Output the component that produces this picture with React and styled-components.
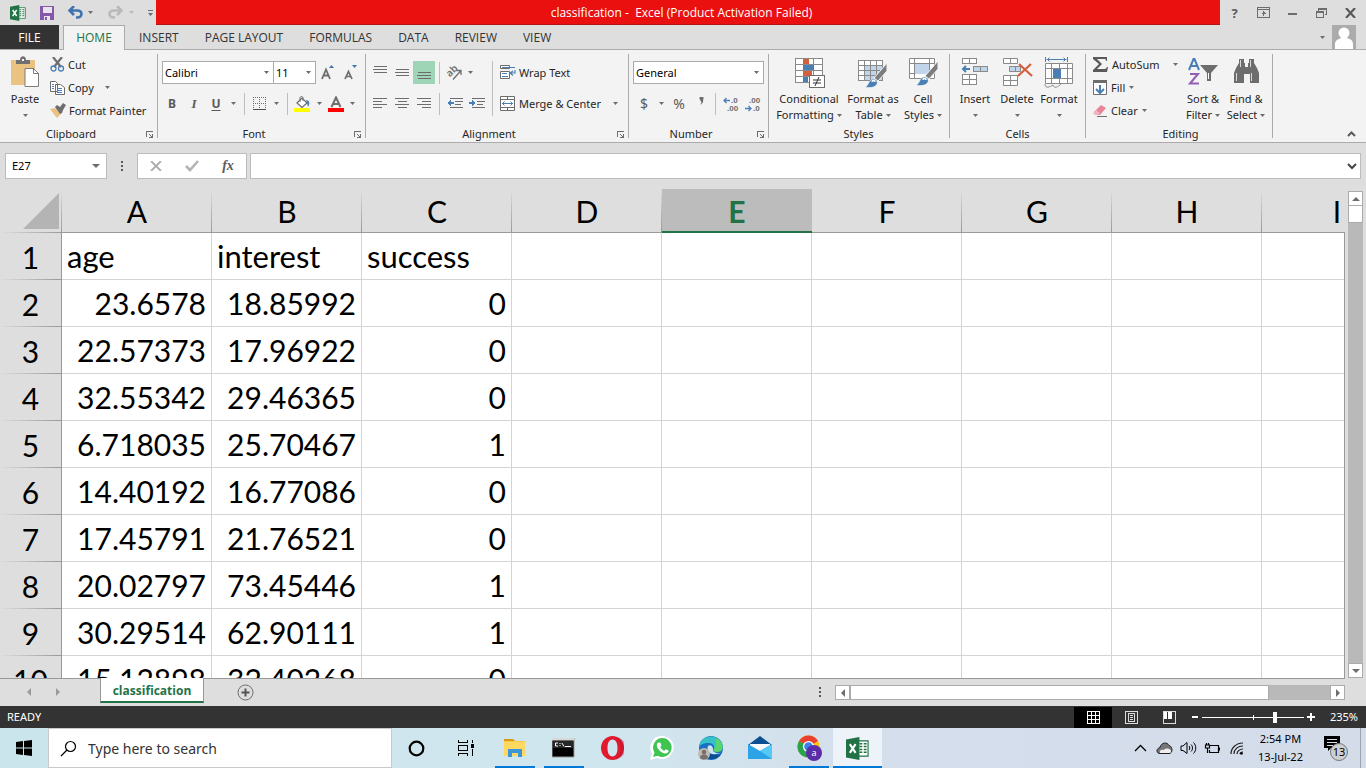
import React from "react";
import styled, { createGlobalStyle, css } from "styled-components";

const UI = `"Noto Sans", "Open Sans", "Liberation Sans", sans-serif`;
const WIDE = `"Open Sans", "Noto Sans", "Liberation Sans", sans-serif`;
const SHEET = `Lato, "Open Sans", "Liberation Sans", sans-serif`;
const GREEN = "#217346";
const GREY = "#6d6d6d";
const BLUE = "#4a7fb5";

const GlobalStyle = createGlobalStyle`
  *, *::before, *::after { box-sizing: border-box; }
  body { margin: 0; background: #dedede; color: #262626; font: 11px/16px ${UI}; }
  button, input, select { font: inherit; color: inherit; }
  button { border: 0; padding: 0; margin: 0; background: none; cursor: pointer; }
  svg { display: block; flex: none; }
`;

const Window = styled.div`
  height: 100vh;
  display: flex;
  flex-direction: column;
  overflow: hidden;
`;

/* ---------- title bar ---------- */
const TitleBar = styled.header`
  display: flex;
  height: 25px;
  flex: none;
`;
const QuickAccess = styled.div`
  width: 156px;
  flex: none;
  display: flex;
  align-items: center;
  padding-left: 10px;
`;
const QuickButton = styled.button`
  width: ${(p) => p.$w || 24}px;
  height: 22px;
  display: flex;
  align-items: center;
`;
const Title = styled.h1`
  flex: 1;
  margin: 0;
  padding-right: 13px;
  background: #eb1010;
  border-bottom: 1px solid #b51212;
  color: #fff;
  font: 400 12px/26px ${WIDE};
  text-align: center;
  white-space: pre;
`;
const WindowControls = styled.div`
  width: 146px;
  flex: none;
  display: flex;
  align-items: center;
`;
const WindowButton = styled.button`
  width: 29px;
  height: 24px;
  display: grid;
  place-items: center;
`;

/* ---------- ribbon tabs ---------- */
const TabStrip = styled.nav`
  display: flex;
  flex: none;
  height: 25px;
  border-bottom: 1px solid #ababab;
  font: 12px/16px ${WIDE};
`;
const FileTab = styled.button`
  width: 59px;
  height: 24px;
  padding-top: 1px;
  margin-right: 4px;
  background: #333;
  color: #fff;
`;
const Tab = styled.button`
  height: 24px;
  padding: 1px 13px 0;
  color: #333;
  ${(p) =>
    p.$active &&
    css`
      height: 25px;
      width: 62px;
      padding: 0;
      margin-right: 1px;
      color: ${GREEN};
      background: #f3f3f3;
      border: 1px solid #ababab;
      border-bottom: 0;
    `}
`;
const Account = styled.button`
  margin-left: auto;
  margin-right: 10px;
  height: 24px;
  display: flex;
  align-items: center;
  gap: 7px;
`;

/* ---------- ribbon ---------- */
const Ribbon = styled.section`
  display: flex;
  flex: none;
  height: 93px;
  background: #f3f3f3;
  border-bottom: 1px solid #ababab;
`;
const Group = styled.fieldset`
  width: ${(p) => p.$w}px;
  min-width: 0;
  flex: none;
  margin: 0;
  border: 0;
  padding: 0 0 0 ${(p) => p.$pad || 4}px;
  display: flex;
  flex-direction: column;
  background: linear-gradient(#ababab, #ababab) right 4px / 1px 84px no-repeat;
`;
const GroupBody = styled.div`
  height: 76px;
  padding-top: ${(p) => p.$top || 0}px;
  display: flex;
  gap: ${(p) => p.$gap || 0}px;
`;
const GroupFooter = styled.div`
  display: flex;
  height: 16px;
  margin-left: -4px;
  padding-right: 1px;
`;
const GroupName = styled.span`
  flex: 1;
  text-align: center;
`;
const Launcher = styled.button`
  width: 15px;
  height: 16px;
  display: grid;
  place-items: center;
`;
const BigButton = styled.button`
  width: ${(p) => p.$w}px;
  height: 70px;
  display: flex;
  flex-direction: column;
  align-items: center;
  white-space: nowrap;
  > svg:first-child { margin-bottom: 3px; }
`;
const BigLabel = styled.span`
  display: flex;
  align-items: center;
  gap: 3px;
  height: 16px;
`;
const Column = styled.div`
  display: flex;
  flex-direction: column;
  padding-top: ${(p) => p.$top || 0}px;
  width: ${(p) => (p.$w ? `${p.$w}px` : "auto")};
`;
const Row = styled.div`
  display: flex;
  align-items: center;
  justify-content: ${(p) => (p.$spread ? "space-between" : "flex-start")};
  height: 23px;
  margin-bottom: ${(p) => p.$mb || 0}px;
`;
const Tool = styled.button`
  width: ${(p) => p.$w || 22}px;
  height: 23px;
  display: grid;
  place-items: center;
  background: ${(p) => (p.$on ? "#9fd5b7" : "none")};
`;
const TextTool = styled.button`
  height: 23px;
  display: flex;
  align-items: center;
  gap: ${(p) => p.$gap || 3}px;
  white-space: nowrap;
`;
const Divider = styled.span`
  width: 1px;
  height: ${(p) => p.$h || 22}px;
  margin: ${(p) => p.$m || "0 4px"};
  background: #bdbdbd;
`;
const Glyph = styled.span`
  color: #5a5a5a;
  font-size: ${(p) => p.$size || 12}px;
  font-weight: ${(p) => (p.$bold ? 700 : 400)};
  font-style: ${(p) => (p.$italic ? "italic" : "normal")};
  font-family: ${(p) => (p.$serif ? `"Liberation Serif", serif` : UI)};
  text-decoration: ${(p) => (p.$underline ? "underline" : "none")};
  text-underline-offset: 2px;
`;
const SelectBox = styled.label`
  width: ${(p) => p.$w}px;
  height: 23px;
  display: flex;
  align-items: center;
  background: #fff;
  border: 1px solid #ababab;
  padding-right: 4px;
  & + & { margin-left: -1px; }
`;
const Select = styled.select`
  appearance: none;
  flex: 1;
  min-width: 0;
  height: 100%;
  border: 0;
  background: none;
  padding: 0 2px;
  color: #000;
  outline: 0;
`;
const CollapseButton = styled.button`
  width: 20px;
  height: 16px;
  margin: auto 5px 0 auto;
  display: grid;
  place-items: center;
`;

/* ---------- formula bar ---------- */
const FormulaBar = styled.div`
  flex: none;
  height: 46px;
  padding: 10px 5px 10px;
  display: flex;
  align-items: center;
`;
const NameBox = styled.label`
  width: 102px;
  height: 26px;
  display: flex;
  align-items: center;
  background: #fff;
  border: 1px solid #bcbcbc;
  padding: 0 6px;
`;
const PlainInput = styled.input`
  flex: 1;
  min-width: 0;
  border: 0;
  padding: 0;
  outline: 0;
  background: none;
  color: #000;
`;
const FormulaButtons = styled.div`
  width: 110px;
  height: 26px;
  display: flex;
  background: #fff;
  border: 1px solid #bcbcbc;
  margin-right: 3px;
`;
const FormulaButton = styled.button`
  width: 36px;
  display: grid;
  place-items: center;
`;
const FormulaField = styled.label`
  flex: 1;
  height: 26px;
  display: flex;
  align-items: center;
  background: #fff;
  border: 1px solid #bcbcbc;
  padding: 0 3px 0 6px;
`;
const Handle = styled.span`
  width: 30px;
  flex: none;
  display: grid;
  place-items: center;
`;

/* ---------- sheet ---------- */
const SheetArea = styled.main`
  flex: 1;
  min-height: 0;
  display: flex;
  padding-right: 3px;
`;
const GridClip = styled.div`
  flex: 1;
  min-width: 0;
  overflow: hidden;
  border-bottom: 1px solid #999;
`;
const RightEdge = styled.div`
  width: 4px;
  margin-top: 43px;
  border-left: 1px solid #999;
`;
const Table = styled.table`
  table-layout: fixed;
  width: 0;
  border-collapse: separate;
  border-spacing: 0;
  font: 30px/36px ${SHEET};
  color: #000;
`;
const Col = styled.col`
  width: ${(p) => p.$w}px;
`;
const Corner = styled.td`
  height: 44px;
  padding: 0 3px 0 0;
  background:
    linear-gradient(#dedede, #999) right / 1px 100% no-repeat,
    linear-gradient(90deg, #dedede, #999) bottom / 100% 1px no-repeat;
  > svg { margin-left: auto; }
`;
const ColHead = styled.th`
  height: 44px;
  padding: 1px 0 0;
  font-weight: 400;
  border-bottom: 1px solid #999;
  background: linear-gradient(#dedede, #999) right / 1px 100% no-repeat;
  ${(p) =>
    p.$selected &&
    css`
      padding-top: 2px;
      font-weight: 700;
      color: ${GREEN};
      background: #bcbcbc;
      border-bottom: 2px solid ${GREEN};
    `}
`;
const RowHead = styled.th`
  height: 47px;
  padding: 0;
  font-weight: 400;
  border-right: 1px solid #999;
  background: linear-gradient(90deg, #dedede, #999) bottom / 100% 1px no-repeat;
`;
const Cell = styled.td`
  height: 47px;
  padding: 0 5px;
  background: #fff;
  border-right: 1px solid #d4d4d4;
  border-bottom: 1px solid #d4d4d4;
  font-size: ${(p) => (p.$text ? 31 : 30)}px;
  text-align: ${(p) => (p.$text ? "left" : "right")};
  white-space: nowrap;
`;
const VScroll = styled.div`
  width: 15px;
  margin: 2px 0 1px;
  display: flex;
  flex-direction: column;
  background: #b9b9b9;
`;
const ScrollButton = styled.button`
  width: 15px;
  height: 15px;
  flex: none;
  display: grid;
  place-items: center;
  background: #fff;
  border: 1px solid #ababab;
`;
const VThumb = styled.div`
  height: 17px;
  margin-bottom: auto;
  background: #fff;
  border: 1px solid #ababab;
  border-top: 0;
`;

/* ---------- sheet tabs ---------- */
const SheetBar = styled.div`
  flex: none;
  height: 27px;
  display: flex;
  padding-right: 21px;
`;
const SheetNav = styled.div`
  width: 100px;
  display: flex;
  padding: 5px 0 0 14px;
`;
const NavButton = styled.button`
  width: 29px;
  height: 15px;
  display: grid;
  place-items: center;
`;
const SheetTab = styled.button`
  width: 104px;
  height: 25px;
  margin-top: -1px;
  padding-top: 2px;
  background: #fff;
  border: 1px solid #999;
  border-top: 0;
  border-bottom: 2px solid ${GREEN};
  color: ${GREEN};
  font: 700 12px/16px ${WIDE};
`;
const AddSheet = styled.button`
  width: 18px;
  height: 26px;
  margin-left: 32px;
  display: grid;
  place-items: center;
`;
const HScroll = styled.div`
  width: 510px;
  height: 15px;
  margin-top: 6px;
  display: flex;
  background: #b9b9b9;
`;
const HThumb = styled.div`
  width: 419px;
  margin-right: auto;
  background: #fff;
  border: 1px solid #ababab;
`;
const BarHandle = styled.span`
  margin-left: auto;
  width: 31px;
  height: 26px;
  display: grid;
  place-items: center;
`;

/* ---------- status bar ---------- */
const StatusBar = styled.footer`
  flex: none;
  height: 22px;
  display: flex;
  align-items: center;
  padding: 0 8px 0 7px;
  background: #333;
  color: #fff;
`;
const Ready = styled.span`
  margin-right: auto;
`;
const ViewButton = styled.button`
  width: 38px;
  height: 21px;
  margin-top: 1px;
  display: grid;
  place-items: center;
  background: ${(p) => (p.$on ? "#000" : "none")};
`;
const ZoomButton = styled.button`
  width: 14px;
  height: 22px;
  display: grid;
  place-items: center;
`;
const ZoomSlider = styled.input`
  appearance: none;
  width: 102px;
  height: 11px;
  margin: 0;
  background:
    linear-gradient(#fff, #fff) 51px 3px / 1px 5px no-repeat,
    linear-gradient(#fff, #fff) 0 5px / 100% 1px no-repeat;
  &::-webkit-slider-thumb {
    appearance: none;
    width: 4px;
    height: 11px;
    background: #fff;
  }
`;
const ZoomValue = styled.output`
  width: 40px;
  text-align: right;
`;

/* ---------- task bar ---------- */
const TaskBar = styled.nav`
  flex: none;
  height: 40px;
  display: flex;
  background: linear-gradient(90deg, #cbe5ed 0%, #d0e6ee 45%, #d5deec 66%, #d4dcea 100%);
  color: #000;
`;
const StartButton = styled.button`
  width: 48px;
  display: grid;
  place-items: center;
`;
const SearchBox = styled.label`
  width: 344px;
  display: flex;
  align-items: center;
  gap: 11px;
  padding-left: 11px;
  background: #fff;
  border: 1px solid #c6cacc;
`;
const SearchInput = styled(PlainInput)`
  font-size: 14px;
  line-height: 20px;
  padding-top: 1px;
  &::placeholder { color: #333; opacity: 1; }
`;
const TaskButton = styled.button`
  width: 49px;
  height: 40px;
  display: grid;
  place-items: center;
  background:
    linear-gradient(#0078d7, #0078d7) bottom / ${(p) => (p.$active ? "49px" : p.$open ? "40px" : "0")} 2px no-repeat,
    ${(p) => (p.$active ? "#eef3f9" : "transparent")};
`;
const Tray = styled.div`
  margin-left: auto;
  display: flex;
  border-right: 1px solid #9aa3ae;
  margin-right: 5px;
`;
const TrayButton = styled.button`
  width: ${(p) => p.$w || 24}px;
  display: grid;
  place-items: center;
`;
const Clock = styled.time`
  width: 63px;
  padding-top: 2px;
  text-align: center;
  line-height: 18px;
`;

/* ---------- drawings ---------- */
const Svg = ({ w = 16, h = w, children, crisp, ...rest }) => (
  <svg width={w} height={h} viewBox={`0 0 ${w} ${h}`} fill="none" aria-hidden="true" shapeRendering={crisp ? "crispEdges" : undefined} {...rest}>
    {children}
  </svg>
);
const Caret = ({ color = GREY, w = 5 }) => {
  const h = Math.ceil(w / 2);
  return (
    <Svg w={w} h={h}>
      <path d={`M0 0h${w}L${w / 2} ${h}z`} fill={color} />
    </Svg>
  );
};
const Arrow = ({ dir, color = "#6d6d6d" }) => (
  <Svg w={8} h={8}>
    <path d={{ up: "M0 6L4 2L8 6z", down: "M0 2L4 6L8 2z", left: "M6 0L2 4L6 8z", right: "M2 0L6 4L2 8z" }[dir]} fill={color} />
  </Svg>
);
const Dots = () => (
  <Svg w={2} h={10} crisp>
    <path d="M0 0h2v2H0zM0 4h2v2H0zM0 8h2v2H0z" fill="#5a5a5a" />
  </Svg>
);
const Excel = ({ w = 16 }) => (
  <svg width={w} height={w} viewBox="0 0 24 24" aria-hidden="true">
    <path d="M12 4h11v16H12z" fill="#fff" stroke={GREEN} strokeWidth="1.2" />
    <path d="M14 7h3M18.500 7h3M14 10h3M18.500 10h3M14 13h3M18.500 13h3M14 16h3M18.500 16h3" stroke={GREEN} strokeWidth="1.600" />
    <path d="M0 2.500L14 0v24L0 21.500z" fill={GREEN} />
    <path d="M4 7.500l6 9M10 7.500l-6 9" stroke="#fff" strokeWidth="2.200" />
  </svg>
);
const Lines = ({ rows }) => (
  <Svg w={15} h={13} crisp>
    {rows.map(([y, x, len]) => (
      <path key={y} d={`M${x} ${y}h${len}v1h-${len}z`} fill={GREY} />
    ))}
  </Svg>
);
const grid = (x, y, w, h, cw, ch) => {
  let d = "";
  for (let i = x; i <= x + w; i += cw) d += `M${i + 0.5} ${y}v${h + 1}`;
  for (let j = y; j <= y + h; j += ch) d += `M${x} ${j + 0.5}h${w + 1}`;
  return d;
};
const Brush = () => (
  <>
    <path d="M29 6v8l-9 10-4-3z" fill="#7d7d7d" stroke="#f3f3f3" strokeWidth="1" />
    <path d="M7 30c4-1 3-7 8-8 3 0 5 3 4 5-2 4-8 4-12 3z" fill={BLUE} stroke="#f3f3f3" strokeWidth=".6" />
    <path d="M14 25c0-2 3-2 3 0" stroke="#fff" strokeWidth="1.500" />
  </>
);
const digits = { fontFamily: "Liberation Sans", fontSize: 8, fontWeight: 700, fill: GREY };

const icons = {
  save: (
    <Svg w={14} h={14} crisp>
      <path d="M0 0h14v14H0z" fill="#8558a8" />
      <path d="M3 1h9v6H3zM4 10h6v4H4z" fill="#e9e2ef" />
      <path d="M5 11h2v3H5z" fill="#8558a8" />
    </Svg>
  ),
  undo: (
    <Svg w={15} h={13}>
      <path d="M6 0L1.500 4.500L6 9M2 4.500h7c6 0 6 7 0 7H8" stroke="#3f72ae" strokeWidth="2.600" />
    </Svg>
  ),
  redo: (
    <Svg w={15} h={13}>
      <path d="M9 0l4.500 4.500L9 9M13 4.500H6c-6 0-6 7 0 7h1" stroke="#b9b9b9" strokeWidth="2.600" />
    </Svg>
  ),
  ribbonOptions: (
    <Svg w={13} h={11} crisp>
      <path d="M.5.5h12v10H.5zM1 2.500h11M6.500 4v5M4.500 6.500h4M5.500 5.500h2" stroke={GREY} />
    </Svg>
  ),
  restore: (
    <Svg w={11} h={10} crisp>
      <path d="M2 0h9v7H9V6h1V2H3v1H2zM0 3h8v7H0zM1 5v4h6V5z" fill={GREY} fillRule="evenodd" />
    </Svg>
  ),
  close: (
    <Svg w={11} h={10}>
      <path d="M1 0l9 10M10 0L1 10" stroke="#5a5a5a" strokeWidth="2.200" />
    </Svg>
  ),
  user: (
    <Svg w={24} h={24}>
      <path d="M0 0h24v24H0z" fill="#ababab" />
      <circle cx="12" cy="8" r="5.500" fill="#fff" />
      <path d="M3 24v-5c0-4 4-5 6-6h6c3 1 6 2 6 6v5z" fill="#fff" />
    </Svg>
  ),
  launcher: (
    <Svg w={7} h={7} crisp>
      <path d="M0 0h7v1H1v5H0z M7 3v4H3V6h3V3z" fill={GREY} />
      <path d="M3 3l3 3" stroke={GREY} />
    </Svg>
  ),
  paste: (
    <Svg w={30} h={32}>
      <path d="M1 4h24v25H1z" fill="#eac282" />
      <path d="M6 8V4h4c0-5 6-5 6 0h4v4z" fill="#707070" />
      <path d="M12 3h2v2h-2z" fill="#fff" />
      <path d="M15 12.500h8.500l5 5v13H15z" fill="#fff" stroke="#7d7d7d" />
      <path d="M23.500 12v5.500H29" stroke="#7d7d7d" />
    </Svg>
  ),
  cut: (
    <Svg w={15} h={15}>
      <path d="M3 0l8 10M12 0L4 10" stroke={GREY} strokeWidth="2.200" />
      <circle cx="3.500" cy="11.500" r="2.500" stroke={BLUE} strokeWidth="1.300" />
      <circle cx="11" cy="11.500" r="2.500" stroke={BLUE} strokeWidth="1.300" />
    </Svg>
  ),
  copy: (
    <Svg w={15} h={14}>
      <path d="M.5.5h5l2 2v8h-7zM5.500 3.500h5l4 3v7h-9z" fill="#fff" stroke={GREY} />
      <path d="M2 3.500h2M2 5.500h2M2 7.500h2M7 7.500h5M7 9.500h5M7 11.500h5" stroke={BLUE} />
    </Svg>
  ),
  painter: (
    <Svg w={16} h={15}>
      <path d="M0 6l5-1 6 6-4 4c-2-2-4-5-7-9z" fill="#eac282" />
      <path d="M5 4l2-2 3 2 3-4 3 2-3 5-1 3-2 1z" fill={GREY} />
    </Svg>
  ),
  grow: (
    <Svg w={14} h={16}>
      <path d="M1 14L5 4.500L9 14M3 10.500h5" stroke={GREY} strokeWidth="1.800" />
      <path d="M8 3L10.500 0L13 3z" fill="#3f72ae" />
    </Svg>
  ),
  shrink: (
    <Svg w={14} h={16}>
      <path d="M1 14L4.500 6.500L8 14M2.500 11.500h4" stroke={GREY} strokeWidth="1.700" />
      <path d="M8 0h5l-2.500 3z" fill="#3f72ae" />
    </Svg>
  ),
  borders: (
    <Svg w={13} h={13} crisp>
      <path d="M.5 0v12M6.500 0v12M12.500 0v12M0 .5h13M0 6.500h13" stroke={GREY} strokeDasharray="1 1" />
      <path d="M0 12h13v1H0z" fill="#4d4d4d" />
    </Svg>
  ),
  fill: (
    <Svg w={17} h={16}>
      <path d="M3 7l5-5 5 5-5 4.500z" fill="#fff" stroke={GREY} strokeWidth="1.200" />
      <path d="M6 6V2c0-2 3-2 3 0v3" stroke={GREY} />
      <path d="M12 4c4 0 4 4 2 7l-1-4z" fill={BLUE} />
      <path d="M0 12h16v4H0z" fill="#ffff00" />
    </Svg>
  ),
  fontColor: (
    <Svg w={16} h={16}>
      <path d="M3.500 11L8 1.500L12.500 11M5.500 8h5" stroke={GREY} strokeWidth="2" />
      <path d="M0 12h16v4H0z" fill="#ff0000" />
    </Svg>
  ),
  orient: (
    <Svg w={16} h={15} overflow="visible">
      <text x="6" y="9" textAnchor="middle" transform="rotate(-45 6 6)" fontFamily="Noto Sans" fontSize="10" fontWeight="600" fill={GREY}>
        ab
      </text>
      <path d="M7 14.500l8-9M10.500 5.500H15V10" stroke={GREY} strokeWidth="1.300" />
    </Svg>
  ),
  outdent: (
    <Svg w={16} h={11} crisp>
      <path d="M3 0h13v1H3zM8 3h8v1H8zM8 6h6v1H8zM3 9h13v1H3z" fill={GREY} />
      <path d="M0 5l4-3v2h3v2H4v2z" fill={BLUE} />
    </Svg>
  ),
  indent: (
    <Svg w={16} h={11} crisp>
      <path d="M3 0h13v1H3zM8 3h8v1H8zM8 6h6v1H8zM3 9h13v1H3z" fill={GREY} />
      <path d="M7 5L3 2v2H0v2h3v2z" fill={BLUE} />
    </Svg>
  ),
  wrap: (
    <Svg w={16} h={15}>
      <path d="M.5.500h9v3h-9zM.5 6.500h9v7h-9z" fill="#fff" stroke={GREY} />
      <path d="M2 2.500h13M2 8.500h5M2 11.500h6M15 5v3h-4M13 6l-3 2 3 2.500" stroke={BLUE} strokeWidth="1.200" />
    </Svg>
  ),
  merge: (
    <Svg w={15} h={15}>
      <path d="M.5.500h14v14H.5zM0 3.500h15M0 11.500h15M7.500 0v3.500M7.500 11.500V15" stroke={GREY} fill="#fff" />
      <path d="M2 7.500h11M4.500 5.500l-2 2 2 2M10.500 5.500l2 2-2 2" stroke={BLUE} />
    </Svg>
  ),
  incDec: (
    <Svg w={16} h={16} overflow="visible">
      <path d="M1 4.500h6M3.500 2L1 4.500L3.500 7" stroke={BLUE} strokeWidth="1.300" />
      <text x="8" y="7" {...digits}>.0</text>
      <text x="4" y="15" {...digits}>.00</text>
    </Svg>
  ),
  decDec: (
    <Svg w={16} h={16} overflow="visible">
      <path d="M0 12.500h6M3.500 10L6 12.500L3.500 15" stroke={BLUE} strokeWidth="1.300" />
      <text x="4" y="7" {...digits}>.00</text>
      <text x="8" y="15" {...digits}>.0</text>
    </Svg>
  ),
  conditional: (
    <Svg w={32} h={32} crisp>
      <path d="M2 2h27v24H2z" fill="#fff" />
      <path d={grid(2, 2, 27, 24, 9, 6)} stroke="#8a8a8a" />
      <path d="M10 3h6v5h-6zM10 15h9v5h-9z" fill="#d35f3c" />
      <path d="M10 9h11v5H10zM10 21h5v5h-5z" fill={BLUE} />
      <path d="M16.500 19.500h15v12h-15z" fill="#fff" stroke={GREY} />
      <path d="M20 24h8M20 27h8M26 21l-4 9" stroke="#333" shapeRendering="auto" />
    </Svg>
  ),
  formatTable: (
    <Svg w={32} h={32}>
      <path d="M1 4h24v20H1z" fill="#fff" />
      <path d="M8 9h17v15H8z" fill="#c0d4ea" />
      <path d={grid(1, 4, 24, 20, 6, 5)} stroke="#8a8a8a" />
      <g transform="translate(1 1)"><Brush /></g>
    </Svg>
  ),
  cellStyles: (
    <Svg w={32} h={32}>
      <path d="M2 2h25v20H2z" fill="#fff" />
      <path d="M2.500 2.500h25v20h-25zM7.500 2v21M22.500 2v21M2 7.500h26M2 17.500h26" stroke="#8a8a8a" />
      <path d="M8 8h14v10H8z" fill="#c0d4ea" />
      <g transform="translate(2 -1)"><Brush /></g>
    </Svg>
  ),
  insert: (
    <Svg w={28} h={32} crisp>
      <path d="M1.500 2.500h14v5h-14zM8.500 2v6M1.500 18.500h14v10h-14zM1 23.500h15M8.500 18v11" fill="#fff" stroke="#8a8a8a" />
      <path d="M12.500 10.500h14v5h-14zM19.500 10v6" fill="#c0d4ea" stroke="#8a8a8a" />
      <path d="M9 13H2M5 10l-3 3 3 3" stroke={BLUE} strokeWidth="2" shapeRendering="auto" />
    </Svg>
  ),
  del: (
    <Svg w={32} h={32}>
      <path d="M2.500 2.500h14v5h-14zM9.500 2v6M2.500 19.500h14v10h-14zM2 24.500h15M9.500 19v11" stroke="#8a8a8a" fill="#fff" />
      <path d="M8.500 10.500h11v5h-11zM14.500 10v6" fill="#c0d4ea" stroke="#8a8a8a" />
      <path d="M18 8l13 12M30 8L17 20" stroke="#d35f3c" strokeWidth="2.200" />
    </Svg>
  ),
  format: (
    <Svg w={30} h={32}>
      <path d="M1.500 7.500h27v20h-27zM1 12.500h28M1 22.500h28M7.500 7v21M23.500 7v21M15.500 7v6M15.500 22v6" fill="#fff" stroke="#8a8a8a" />
      <path d="M9 13h8v9H9z" fill={BLUE} />
      <path d="M1.500 1v5M23.500 1v5M2.500 3.500h20M5.500 1.500l-2 2 2 2M19.500 1.500l2 2-2 2" stroke={BLUE} />
      <path d="M1 28c0 5 5 3 8 1 1 4 5 2 8-1" stroke="#8a8a8a" fill="#f3f3f3" />
    </Svg>
  ),
  sigma: (
    <Svg w={15} h={15}>
      <path d="M0 0h14v4h-1c0-2-1-2-2-2H4l5 5-5 5h7c1 0 2 0 3-2h1l-1 5H0v-2l6-6-6-5z" fill="#5a5a5a" />
    </Svg>
  ),
  fillDown: (
    <Svg w={14} h={15}>
      <path d="M.5.500h13v14H.5z" fill="#fff" stroke={GREY} />
      <path d="M0 0h14v3H0z" fill={GREY} />
      <path d="M7 5v8M3 9l4 4 4-4" stroke={BLUE} strokeWidth="2" />
    </Svg>
  ),
  eraser: (
    <Svg w={14} h={14}>
      <path d="M1 8l7-7 5 3-6 7H3z" fill="#e8849a" />
      <path d="M0 9l3-3 4 3-2 2H2z" fill="#f0b4c0" />
      <path d="M4 12.500h10" stroke={GREY} />
    </Svg>
  ),
  sort: (
    <Svg w={30} h={32}>
      <path d="M1 14L5.500 3h1L11 14M3 10h6" stroke={BLUE} strokeWidth="2" />
      <path d="M2 18h8L2 27.500h9" stroke="#935eb3" strokeWidth="2" />
      <path d="M12 9h18l-7 8v8h-4v-8z" fill={GREY} />
      <path d="M20 17h1v6h-1z" fill="#fff" />
    </Svg>
  ),
  find: (
    <Svg w={28} h={32}>
      <path d="M7 3h5v4h1v4h3V7h1V3h5v4l3 5 2 5v10h-9v-9h-6v9H2V17l2-5 3-5z" fill={GREY} />
      <path d="M8.500 4v7M18.500 4v7M4.500 17v8M19.500 17v8" stroke="#d8d8d8" />
    </Svg>
  ),
  collapse: (
    <Svg w={9} h={6}>
      <path d="M1 5l3.500-3.500L8 5" stroke="#5a5a5a" strokeWidth="2" />
    </Svg>
  ),
  cancel: (
    <Svg w={12} h={10}>
      <path d="M1 0l10 10M11 0L1 10" stroke="#ababab" strokeWidth="1.800" />
    </Svg>
  ),
  accept: (
    <Svg w={14} h={12}>
      <path d="M1 6l4 4L13 1" stroke="#b4b4b4" strokeWidth="2.600" />
    </Svg>
  ),
  expand: (
    <Svg w={10} h={7}>
      <path d="M1 1l4 4 4-4" stroke="#444" strokeWidth="2" />
    </Svg>
  ),
  corner: (
    <Svg w={36} h={36}>
      <path d="M36 0v36H0z" fill="#b4b4b4" />
    </Svg>
  ),
  plusCircle: (
    <Svg w={17} h={17}>
      <circle cx="8.500" cy="8.500" r="7.500" stroke={GREY} />
      <path d="M8.500 4.500v8M4.500 8.500h8" stroke="#555" strokeWidth="2" />
    </Svg>
  ),
  normalView: (
    <Svg w={13} h={13} crisp>
      <path d={grid(0, 0, 12, 12, 4, 4)} stroke="#fff" />
    </Svg>
  ),
  pageView: (
    <Svg w={13} h={13} crisp>
      <path d="M.5.500h12v12H.5zM3.500 2.500h6v8h-6zM5 4.500h3M5 6.500h3M5 8.500h3" stroke="#ddd" />
    </Svg>
  ),
  breakView: (
    <Svg w={13} h={13} crisp>
      <path d="M0 0h4v8H0zM5 0h4v8H5z" fill="#fff" />
      <path d="M.5.500h12v12H.5z" stroke="#ddd" />
    </Svg>
  ),
  minus: (
    <Svg w={6} h={2} crisp><path d="M0 0h6v2H0z" fill="#fff" /></Svg>
  ),
  plus: (
    <Svg w={8} h={8} crisp><path d="M3 0h2v3h3v2H5v3H3V5H0V3h3z" fill="#fff" /></Svg>
  ),
  windows: (
    <Svg w={16} h={16}>
      <path d="M0 2l7-1v6.500H0zM8 1l8-1v7.500H8zM0 8.500h7V15l-7-1zM8 8.500h8V16l-8-1z" fill="#000" />
    </Svg>
  ),
  search: (
    <Svg w={17} h={17}>
      <circle cx="10.500" cy="6.500" r="5" stroke="#000" strokeWidth="1.200" />
      <path d="M7 10L1 16" stroke="#000" strokeWidth="1.200" />
    </Svg>
  ),
  cortana: (
    <Svg w={17} h={17}><circle cx="8.500" cy="8.500" r="6.800" stroke="#000" strokeWidth="2.200" /></Svg>
  ),
  taskView: (
    <Svg w={17} h={16} crisp>
      <path d="M1.500 0v2.500h9V0M1.500 16v-2.500h9V16M1.500 5.500h9v5h-9zM15.500 0v3M15.500 9v7" stroke="#000" />
      <path d="M14 4h3v4h-3z" fill="#000" />
    </Svg>
  ),
  explorer: (
    <Svg w={22} h={20}>
      <path d="M0 1h9l2 2h10v15H0z" fill="#f7c948" />
      <path d="M0 1h9l2 2H0z" fill="#d99a16" />
      <path d="M0 4h21v14H0z" fill="#ffd862" />
      <path d="M4 19v-8h14v8h-4v-4H8v4z" fill="#3c95d6" />
    </Svg>
  ),
  cmd: (
    <Svg w={23} h={20}>
      <path d="M0 0h22v19H0z" fill="#000" stroke="#999" />
      <path d="M0 0h22v2.500H0z" fill="#d8d8d8" />
      <path d="M1 3h20v7H1z" fill="#262626" />
      <path d="M6 5H3.500v3H6M8 5v1M8 7v1M10 5l2 3.500M13 8.500h6" stroke="#fff" />
    </Svg>
  ),
  opera: (
    <Svg w={23} h={24}>
      <path fillRule="evenodd" d="M11.500 0a11.500 12 0 100 24a11.500 12 0 100-24zM11.500 3.500c3.500 0 5 4 5 8.500s-1.500 8.500-5 8.500-5-4-5-8.500 1.500-8.500 5-8.500z" fill="#e01b30" />
      <path d="M14 1a11 11 0 010 22c3-1 6-5 6-11S17 2 14 1z" fill="#a80d22" opacity=".35" />
    </Svg>
  ),
  whatsapp: (
    <Svg w={24} h={24}>
      <path d="M12.500 0a11.500 11.500 0 11-5 22L0 24l2-6.500A11.500 11.500 0 0112.500 0z" fill="#fff" />
      <path d="M12.500 2a9.500 9.500 0 11-5 17.800L3 21l1.500-4.500A9.500 9.500 0 0112.500 2z" fill="#3fc351" />
      <path d="M8.500 6.500l2 .2 1 2.800-1.200 1.500c1 2 2 3 4 3.800l1.500-1.500 2.800 1.200c0 2-1.500 3-3.300 3-4-.5-8.300-4.500-8.500-8.500 0-1.200.7-2.200 1.700-2.500z" fill="#fff" />
    </Svg>
  ),
  edge: (
    <Svg w={25} h={25}>
      <circle cx="13" cy="12" r="12" fill="#1b6fc2" />
      <path d="M1 11C2-2 20-3 24.500 8c2 7-7 9-9 6 2-3 0-7-5-7S2 9 1 11z" fill="#35c1c5" />
      <path d="M17 2c7 2 9 9 7 12-2 3-8 3-9 0 3-4 4-7 2-12z" fill="#62d957" opacity=".8" />
      <path d="M9 13c1 6 8 7 14 5-4 6-12 7-16 2z" fill="#0d4c94" />
      <path d="M10 10c-2 5 2 9 8 8 3 0 5-1 5-1-4 1-9-1-8-4 0-3-3-5-5-3z" fill="#cfe5f0" />
      <circle cx="6" cy="18" r="6" fill="#bfb9b4" />
      <circle cx="6" cy="16" r="2.300" fill="#77706b" />
      <path d="M2 22c0-5 8-5 8 0-2 2-6 2-8 0z" fill="#77706b" />
    </Svg>
  ),
  mail: (
    <Svg w={24} h={24}>
      <path d="M0 9l12-9 12 9-12 8z" fill="#0c4f93" />
      <path d="M2 8h20v7H2z" fill="#f7fafc" />
      <path d="M0 8l12 7 12-7v15H0z" fill="#2ba3e6" />
      <path d="M24 8v15L12 15z" fill="#55c8f5" />
    </Svg>
  ),
  chrome: (
    <Svg w={26} h={26}>
      <circle cx="12.500" cy="11.500" r="11" fill="#fbc116" />
      <path d="M12.500 11.500L3 6A11 11 0 0122 6z" fill="#e8412f" />
      <path d="M12.500 11.500L3 6a11 11 0 007.500 16.500l5-7z" fill="#2ba24c" />
      <circle cx="12.500" cy="11.500" r="5.600" fill="#fff" />
      <circle cx="12.500" cy="11.500" r="4.300" fill="#3f7fe8" />
      <circle cx="18" cy="18" r="8" fill="#5a2ca8" />
      <text x="18" y="21" textAnchor="middle" fontFamily="Noto Sans" fontSize="9" fill="#fff">a</text>
    </Svg>
  ),
  chevronUp: (
    <Svg w={13} h={8}><path d="M1 7l5.500-5.500L12 7" stroke="#000" strokeWidth="1.300" /></Svg>
  ),
  cloud: (
    <Svg w={17} h={13}>
      <path d="M4 11.500c-4 0-4-5 0-6 1-5 7-6 9-2 4 1 4 8 0 8z" fill="#777" stroke="#222" />
      <path d="M4 11c-1-3 2-4 4-3 2-3 7-1 7 1 0 1 0 2-2 2z" fill="#eee" />
    </Svg>
  ),
  sound: (
    <Svg w={17} h={14}>
      <path d="M1 5h2l4-3.500v11L3 9.500H1zM9 5c1 1 1 3 0 4M11 3.500c2 2 2 5 0 7M13.500 1.500c3 3 3 8 0 11" stroke="#000" />
    </Svg>
  ),
  battery: (
    <Svg w={16} h={13}>
      <path d="M6 3.500h8.500v7H5.500V8M15.500 5.500v3M1.500 3v3h4V3zM2.500 1v2M4.500 1v2M3.500 6v5" stroke="#000" strokeWidth="1.200" />
    </Svg>
  ),
  wifi: (
    <Svg w={14} h={14}>
      <path d="M1 13C1 7 6 2 13 2M4 13c0-5 4-8 9-8M7 13c0-3 3-5 6-5M10 13c0-1 1-2 3-2" stroke="#222" strokeWidth="1.200" />
      <circle cx="11.500" cy="12.500" r="1.300" fill="#000" />
    </Svg>
  ),
  notifications: (
    <Svg w={26} h={26}>
      <path d="M1 1h16v12H8l-3 3v-3H1z" fill="#000" />
      <path d="M4 4.500h10M4 7.500h10M4 10.500h6" stroke="#d4dcea" />
      <circle cx="16" cy="17" r="8.500" fill="#cfcfcf" stroke="#777" />
      <text x="16" y="21" textAnchor="middle" fontFamily="Noto Sans" fontSize="11" fill="#000">13</text>
    </Svg>
  ),
};

const columns = ["A", "B", "C", "D", "E", "F", "G", "H", "I"];
const rows = [
  ["age", "interest", "success"],
  ["23.6578", "18.85992", "0"],
  ["22.57373", "17.96922", "0"],
  ["32.55342", "29.46365", "0"],
  ["6.718035", "25.70467", "1"],
  ["14.40192", "16.77086", "0"],
  ["17.45791", "21.76521", "0"],
  ["20.02797", "73.45446", "1"],
  ["30.29514", "62.90111", "1"],
  ["15.12898", "32.40268", "0"],
];

const RibbonGroup = ({ name, width, pad, top, gap, launcher, children }) => (
  <Group $w={width} $pad={pad} aria-label={name}>
    <GroupBody $top={top} $gap={gap}>{children}</GroupBody>
    <GroupFooter>
      <GroupName>{name}</GroupName>
      {launcher && <Launcher aria-label={`${name} settings`}>{icons.launcher}</Launcher>}
    </GroupFooter>
  </Group>
);
const Big = ({ icon, w, top, bottom }) => (
  <BigButton $w={w}>
    {icon}
    <BigLabel>{top}</BigLabel>
    <BigLabel>
      {bottom}
      <Caret />
    </BigLabel>
  </BigButton>
);
const More = ({ w = 12, label }) => (
  <Tool $w={w} aria-label={label}>
    <Caret />
  </Tool>
);
const Drop = ({ w, label, value }) => (
  <SelectBox $w={w}>
    <Select aria-label={label} defaultValue={value}>
      <option>{value}</option>
    </Select>
    <Caret />
  </SelectBox>
);

export default function App() {
  return (
    <Window>
      <GlobalStyle />
      <TitleBar>
        <QuickAccess>
          <QuickButton $w={30} aria-label="Excel"><Excel w={16} /></QuickButton>
          <QuickButton $w={28} aria-label="Save">{icons.save}</QuickButton>
          <QuickButton $w={20} aria-label="Undo">{icons.undo}</QuickButton>
          <QuickButton $w={20} aria-label="Undo history"><Caret /></QuickButton>
          <QuickButton $w={21} aria-label="Redo">{icons.redo}</QuickButton>
          <QuickButton $w={19} aria-label="Redo history"><Caret color="#b9b9b9" /></QuickButton>
          <QuickButton $w={8} aria-label="Customize toolbar">
            <Svg w={5} h={6}><path d="M0 0h5v1H0zM0 3h5L2.500 6z" fill={GREY} /></Svg>
          </QuickButton>
        </QuickAccess>
        <Title>{"classification -  Excel (Product Activation Failed)"}</Title>
        <WindowControls>
          <WindowButton aria-label="Help"><Glyph $bold $size={13}>?</Glyph></WindowButton>
          <WindowButton aria-label="Ribbon display options">{icons.ribbonOptions}</WindowButton>
          <WindowButton aria-label="Minimize">
            <Svg w={9} h={4} crisp><path d="M0 2h9v2H0z" fill={GREY} /></Svg>
          </WindowButton>
          <WindowButton aria-label="Restore">{icons.restore}</WindowButton>
          <WindowButton aria-label="Close">{icons.close}</WindowButton>
        </WindowControls>
      </TitleBar>

      <TabStrip>
        <FileTab>FILE</FileTab>
        <Tab $active>HOME</Tab>
        {["INSERT", "PAGE LAYOUT", "FORMULAS", "DATA", "REVIEW", "VIEW"].map((t) => (
          <Tab key={t}>{t}</Tab>
        ))}
        <Account aria-label="Account"><Caret />{icons.user}</Account>
      </TabStrip>

      <Ribbon>
        <RibbonGroup name="Clipboard" width={158} gap={4} launcher>
          <Column $top={6}>
            <BigButton $w={42}>
              {icons.paste}
              <BigLabel>Paste</BigLabel>
              <BigLabel><Caret /></BigLabel>
            </BigButton>
          </Column>
          <Column $top={3}>
            <Row><TextTool>{icons.cut}Cut</TextTool></Row>
            <Row><TextTool>{icons.copy}Copy</TextTool><More w={28} label="Copy options" /></Row>
            <Row><TextTool>{icons.painter}Format Painter</TextTool></Row>
          </Column>
        </RibbonGroup>

        <RibbonGroup name="Font" width={208} top={11} launcher>
          <Column>
            <Row $mb={8}>
              <Drop w={112} label="Font" value="Calibri" />
              <Drop w={43} label="Font size" value="11" />
              <Tool $w={24} aria-label="Increase font size">{icons.grow}</Tool>
              <Tool aria-label="Decrease font size">{icons.shrink}</Tool>
            </Row>
            <Row>
              <Tool $w={20} aria-label="Bold"><Glyph $bold>B</Glyph></Tool>
              <Tool $w={24} aria-label="Italic"><Glyph $italic $serif $bold $size={13}>I</Glyph></Tool>
              <Tool $w={20} aria-label="Underline"><Glyph $bold $underline>U</Glyph></Tool>
              <More w={14} label="Underline options" />
              <Divider />
              <Tool $w={20} aria-label="Borders">{icons.borders}</Tool>
              <More w={14} label="Border options" />
              <Divider />
              <Tool $w={20} aria-label="Fill color">{icons.fill}</Tool>
              <More w={14} label="Fill color options" />
              <Tool $w={20} aria-label="Font color">{icons.fontColor}</Tool>
              <More label="Font color options" />
            </Row>
          </Column>
        </RibbonGroup>

        <RibbonGroup name="Alignment" width={263} top={11} pad={3} launcher>
          <Column>
            <Row $mb={8}>
              <Tool aria-label="Top align"><Lines rows={[[0, 1, 13], [3, 0, 14], [6, 1, 13]]} /></Tool>
              <Tool aria-label="Middle align"><Lines rows={[[3, 1, 13], [6, 0, 14], [9, 1, 13]]} /></Tool>
              <Tool $on aria-label="Bottom align"><Lines rows={[[6, 1, 13], [9, 0, 14], [12, 1, 13]]} /></Tool>
              <Divider />
              <Tool $w={20} aria-label="Orientation">{icons.orient}</Tool>
              <More label="Orientation options" />
            </Row>
            <Row>
              <Tool aria-label="Align left"><Lines rows={[[1, 0, 14], [4, 0, 9], [7, 0, 14], [10, 0, 9]]} /></Tool>
              <Tool aria-label="Center"><Lines rows={[[1, 0, 14], [4, 3, 9], [7, 0, 14], [10, 3, 9]]} /></Tool>
              <Tool aria-label="Align right"><Lines rows={[[1, 0, 14], [4, 5, 9], [7, 0, 14], [10, 5, 9]]} /></Tool>
              <Divider />
              <Tool aria-label="Decrease indent">{icons.outdent}</Tool>
              <Tool aria-label="Increase indent">{icons.indent}</Tool>
            </Row>
          </Column>
          <Divider $h={55} $m="0 7px 0 4px" />
          <Column>
            <Row $mb={8}><TextTool>{icons.wrap}Wrap Text</TextTool></Row>
            <Row><TextTool $gap={4}>{icons.merge}Merge &amp; Center</TextTool><More w={28} label="Merge options" /></Row>
          </Column>
        </RibbonGroup>

        <RibbonGroup name="Number" width={140} top={11} launcher>
          <Column>
            <Row $mb={8}><Drop w={131} label="Number format" value="General" /></Row>
            <Row>
              <Tool aria-label="Currency"><Glyph $size={14}>$</Glyph></Tool>
              <More label="Currency options" />
              <Tool $w={24} aria-label="Percent"><Glyph $size={14}>%</Glyph></Tool>
              <Tool $w={20} aria-label="Comma style">
                <Svg w={5} h={13}><path d="M1 2.500a2 2 0 113 0c1 2-1 5-3 5 1-1 2-2 1-3z" fill={GREY} /></Svg>
              </Tool>
              <Divider />
              <Tool aria-label="Increase decimal">{icons.incDec}</Tool>
              <Tool aria-label="Decrease decimal">{icons.decDec}</Tool>
            </Row>
          </Column>
        </RibbonGroup>

        <RibbonGroup name="Styles" width={181} top={6} pad={3}>
          <Big w={74} icon={icons.conditional} top="Conditional" bottom="Formatting" />
          <Big w={54} icon={icons.formatTable} top="Format as" bottom="Table" />
          <Big w={46} icon={icons.cellStyles} top="Cell" bottom="Styles" />
        </RibbonGroup>

        <RibbonGroup name="Cells" width={136} top={6}>
          <Big w={42} icon={icons.insert} top="Insert" />
          <Big w={42} icon={icons.del} top="Delete" />
          <Big w={42} icon={icons.format} top="Format" />
        </RibbonGroup>

        <RibbonGroup name="Editing" width={187} pad={7}>
          <Column $top={3} $w={88}>
            <Row $spread><TextTool $gap={4}>{icons.sigma}AutoSum</TextTool><More label="AutoSum options" /></Row>
            <Row><TextTool $gap={4}>{icons.fillDown}Fill <Caret /></TextTool></Row>
            <Row><TextTool $gap={4}>{icons.eraser}Clear <Caret /></TextTool></Row>
          </Column>
          <Column $top={6}>
            <Big w={44} icon={icons.sort} top="Sort &" bottom="Filter" />
          </Column>
          <Column $top={6}>
            <Big w={42} icon={icons.find} top="Find &" bottom="Select" />
          </Column>
        </RibbonGroup>
        <CollapseButton aria-label="Collapse ribbon">{icons.collapse}</CollapseButton>
      </Ribbon>

      <FormulaBar>
        <NameBox>
          <PlainInput aria-label="Name box" defaultValue="E27" />
          <Caret w={8} />
        </NameBox>
        <Handle><Dots /></Handle>
        <FormulaButtons>
          <FormulaButton aria-label="Cancel">{icons.cancel}</FormulaButton>
          <FormulaButton aria-label="Enter">{icons.accept}</FormulaButton>
          <FormulaButton aria-label="Insert function"><Glyph $serif $italic $bold $size={14}>fx</Glyph></FormulaButton>
        </FormulaButtons>
        <FormulaField>
          <PlainInput aria-label="Formula" />
          {icons.expand}
        </FormulaField>
      </FormulaBar>

      <SheetArea>
        <GridClip>
          <Table>
            <colgroup>
              <Col $w={62} />
              {columns.map((c) => <Col key={c} $w={150} />)}
            </colgroup>
            <thead>
              <tr>
                <Corner>{icons.corner}</Corner>
                {columns.map((c) => <ColHead key={c} scope="col" $selected={c === "E"}>{c}</ColHead>)}
              </tr>
            </thead>
            <tbody>
              {rows.map((r, i) => (
                <tr key={i}>
                  <RowHead scope="row">{i + 1}</RowHead>
                  {columns.map((c, j) => <Cell key={c} $text={i === 0}>{r[j]}</Cell>)}
                </tr>
              ))}
            </tbody>
          </Table>
        </GridClip>
        <RightEdge />
        <VScroll>
          <ScrollButton aria-label="Scroll up"><Arrow dir="up" /></ScrollButton>
          <VThumb />
          <ScrollButton aria-label="Scroll down"><Arrow dir="down" /></ScrollButton>
        </VScroll>
      </SheetArea>

      <SheetBar>
        <SheetNav>
          <NavButton aria-label="Previous sheet"><Arrow dir="left" color="#9a9a9a" /></NavButton>
          <NavButton aria-label="Next sheet"><Arrow dir="right" color="#9a9a9a" /></NavButton>
        </SheetNav>
        <SheetTab>classification</SheetTab>
        <AddSheet aria-label="New sheet">{icons.plusCircle}</AddSheet>
        <BarHandle><Dots /></BarHandle>
        <HScroll>
          <ScrollButton aria-label="Scroll left"><Arrow dir="left" /></ScrollButton>
          <HThumb />
          <ScrollButton aria-label="Scroll right"><Arrow dir="right" /></ScrollButton>
        </HScroll>
      </SheetBar>

      <StatusBar>
        <Ready>READY</Ready>
        <ViewButton $on aria-label="Normal view">{icons.normalView}</ViewButton>
        <ViewButton aria-label="Page layout view">{icons.pageView}</ViewButton>
        <ViewButton aria-label="Page break preview">{icons.breakView}</ViewButton>
        <ZoomButton aria-label="Zoom out">{icons.minus}</ZoomButton>
        <ZoomSlider type="range" aria-label="Zoom" min="0" max="100" defaultValue="72" />
        <ZoomButton aria-label="Zoom in">{icons.plus}</ZoomButton>
        <ZoomValue>235%</ZoomValue>
      </StatusBar>

      <TaskBar>
        <StartButton aria-label="Start">{icons.windows}</StartButton>
        <SearchBox>
          {icons.search}
          <SearchInput aria-label="Search" placeholder="Type here to search" />
        </SearchBox>
        <TaskButton aria-label="Cortana">{icons.cortana}</TaskButton>
        <TaskButton aria-label="Task view">{icons.taskView}</TaskButton>
        <TaskButton $open aria-label="File Explorer">{icons.explorer}</TaskButton>
        <TaskButton $open aria-label="Command Prompt">{icons.cmd}</TaskButton>
        <TaskButton aria-label="Opera">{icons.opera}</TaskButton>
        <TaskButton aria-label="WhatsApp">{icons.whatsapp}</TaskButton>
        <TaskButton aria-label="Edge">{icons.edge}</TaskButton>
        <TaskButton aria-label="Mail">{icons.mail}</TaskButton>
        <TaskButton $open aria-label="Chrome">{icons.chrome}</TaskButton>
        <TaskButton $active aria-label="Excel workbook"><Excel w={23} /></TaskButton>
        <Tray>
          <TrayButton aria-label="Show hidden icons">{icons.chevronUp}</TrayButton>
          <TrayButton aria-label="OneDrive">{icons.cloud}</TrayButton>
          <TrayButton aria-label="Volume">{icons.sound}</TrayButton>
          <TrayButton aria-label="Battery">{icons.battery}</TrayButton>
          <TrayButton $w={25} aria-label="Network">{icons.wifi}</TrayButton>
          <Clock>2:54 PM<br />13-Jul-22</Clock>
          <TrayButton $w={48} aria-label="Notifications">{icons.notifications}</TrayButton>
        </Tray>
      </TaskBar>
    </Window>
  );
}
